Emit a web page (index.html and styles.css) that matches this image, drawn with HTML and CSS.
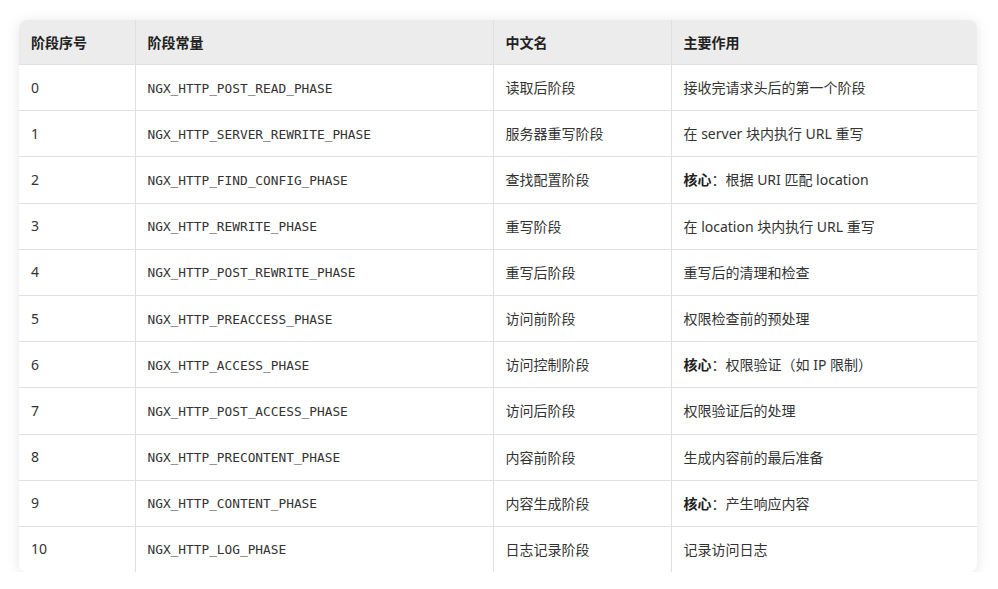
FILE: index.html
```html
<!DOCTYPE html>
<html lang="zh">
<head>
<meta charset="utf-8">
<link rel="stylesheet" href="styles.css">
</head>
<body>
<div class="card">
<table class="phases">
<colgroup>
<col class="c1"><col class="c2"><col class="c3"><col class="c4">
</colgroup>
<thead>
<tr><th>阶段序号</th><th>阶段常量</th><th>中文名</th><th>主要作用</th></tr>
</thead>
<tbody>
<tr><td>0</td><td><code>NGX_HTTP_POST_READ_PHASE</code></td><td>读取后阶段</td><td>接收完请求头后的第一个阶段</td></tr>
<tr><td>1</td><td><code>NGX_HTTP_SERVER_REWRITE_PHASE</code></td><td>服务器重写阶段</td><td>在 server 块内执行 URL 重写</td></tr>
<tr><td>2</td><td><code>NGX_HTTP_FIND_CONFIG_PHASE</code></td><td>查找配置阶段</td><td><strong>核心</strong>：根据 URI 匹配 location</td></tr>
<tr><td>3</td><td><code>NGX_HTTP_REWRITE_PHASE</code></td><td>重写阶段</td><td>在 location 块内执行 URL 重写</td></tr>
<tr><td>4</td><td><code>NGX_HTTP_POST_REWRITE_PHASE</code></td><td>重写后阶段</td><td>重写后的清理和检查</td></tr>
<tr><td>5</td><td><code>NGX_HTTP_PREACCESS_PHASE</code></td><td>访问前阶段</td><td>权限检查前的预处理</td></tr>
<tr><td>6</td><td><code>NGX_HTTP_ACCESS_PHASE</code></td><td>访问控制阶段</td><td><strong>核心</strong>：权限验证（如 IP 限制）</td></tr>
<tr><td>7</td><td><code>NGX_HTTP_POST_ACCESS_PHASE</code></td><td>访问后阶段</td><td>权限验证后的处理</td></tr>
<tr><td>8</td><td><code>NGX_HTTP_PRECONTENT_PHASE</code></td><td>内容前阶段</td><td>生成内容前的最后准备</td></tr>
<tr><td>9</td><td><code>NGX_HTTP_CONTENT_PHASE</code></td><td>内容生成阶段</td><td><strong>核心</strong>：产生响应内容</td></tr>
<tr><td>10</td><td><code>NGX_HTTP_LOG_PHASE</code></td><td>日志记录阶段</td><td>记录访问日志</td></tr>
</tbody>
</table>
</div>
</body>
</html>
```
FILE: styles.css
```css
html, body {
  margin: 0;
  padding: 0;
  background: #ffffff;
}
body {
  padding: 20px 21px 0 19px;
  font-family: "Noto Sans", "Noto Sans CJK SC", sans-serif;
  font-size: 14px;
  color: #333333;
}
.card {
  width: 958px;
  border-radius: 8px;
  overflow: hidden;
  box-shadow: 0 2px 14px rgba(0, 0, 0, 0.1);
  background: #ffffff;
}
.phases {
  width: 100%;
  border-collapse: collapse;
  table-layout: fixed;
}
.c1 { width: 116px; }
.c2 { width: 358px; }
.c3 { width: 178px; }
.c4 { width: 306px; }
.phases th,
.phases td {
  text-align: left;
  padding: 0 12px;
  border: 1px solid #e0e0e0;
  white-space: nowrap;
}
.phases tr > :first-child { border-left: none; }
.phases tr > :last-child { border-right: none; }
.phases thead th {
  border-top: none;
  height: 44px;
  background: #ececec;
  font-weight: 700;
  color: #222222;
}
.phases tbody td {
  height: 44.2px;
  padding-bottom: 1px;
}
.phases tbody tr:last-child td { border-bottom: none; }
.phases code {
  font-family: "DejaVu Sans Mono", monospace;
  font-size: 12.8px;
  color: #333333;
}
.phases strong {
  font-weight: 700;
  color: #222222;
}
```
